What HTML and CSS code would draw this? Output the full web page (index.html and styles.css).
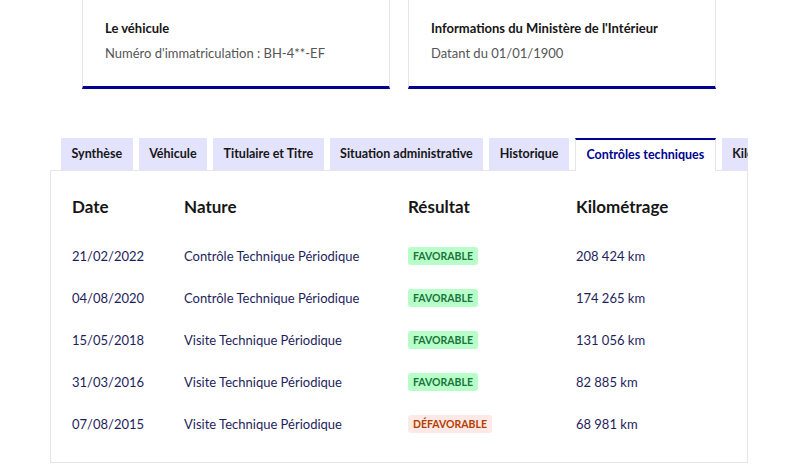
FILE: index.html
```html
<!DOCTYPE html>
<html lang="fr">
  <head>
    <meta charset="UTF-8" />
    <meta name="viewport" content="width=device-width, initial-scale=1.0" />
    <title>Historique du véhicule</title>
    <link rel="stylesheet" href="styles.css">
  </head>
  <body>
    <div class="cards">
      <div class="card">
        <h3 class="card-title">Le véhicule</h3>
        <p class="card-desc">Numéro d'immatriculation : BH-4**-EF</p>
      </div>
      <div class="card">
        <h3 class="card-title">Informations du Ministère de l'Intérieur</h3>
        <p class="card-desc">Datant du 01/01/1900</p>
      </div>
    </div>

    <div class="tabs">
      <ul class="tab-list">
        <li class="tab">Synthèse</li>
        <li class="tab">Véhicule</li>
        <li class="tab">Titulaire et Titre</li>
        <li class="tab">Situation administrative</li>
        <li class="tab">Historique</li>
        <li class="tab active">Contrôles techniques</li>
        <li class="tab">Kilométrage</li>
      </ul>
      <div class="tab-panel">
        <table class="ct-table">
          <thead>
            <tr>
              <th class="col-date">Date</th>
              <th class="col-nature">Nature</th>
              <th class="col-result">Résultat</th>
              <th>Kilométrage</th>
            </tr>
          </thead>
          <tbody>
            <tr>
              <td>21/02/2022</td>
              <td>Contrôle Technique Périodique</td>
              <td><span class="badge ok">Favorable</span></td>
              <td>208&#8239;424 km</td>
            </tr>
            <tr>
              <td>04/08/2020</td>
              <td>Contrôle Technique Périodique</td>
              <td><span class="badge ok">Favorable</span></td>
              <td>174&#8239;265 km</td>
            </tr>
            <tr>
              <td>15/05/2018</td>
              <td>Visite Technique Périodique</td>
              <td><span class="badge ok">Favorable</span></td>
              <td>131&#8239;056 km</td>
            </tr>
            <tr>
              <td>31/03/2016</td>
              <td>Visite Technique Périodique</td>
              <td><span class="badge ok">Favorable</span></td>
              <td>82&#8239;885 km</td>
            </tr>
            <tr>
              <td>07/08/2015</td>
              <td>Visite Technique Périodique</td>
              <td><span class="badge ko">Défavorable</span></td>
              <td>68&#8239;981 km</td>
            </tr>
          </tbody>
        </table>
      </div>
    </div>
  </body>
</html>
```

FILE: styles.css
```css
* {
  margin: 0;
  padding: 0;
  box-sizing: border-box;
}

body {
  font-family: Lato, "Noto Sans", Arial, sans-serif;
  color: #161616;
  background: #fff;
  width: 798px;
  height: 466px;
  overflow: hidden;
}

/* Cartes du haut */
.cards {
  display: flex;
  gap: 18px;
  padding-left: 82px;
  margin-top: -20px;
}

.card {
  width: 308px;
  height: 109px;
  border: 1px solid #e5e5e5;
  border-bottom: 3px solid #000091;
  padding: 37px 22px 0;
}

.card-title {
  font-size: 13px;
  font-weight: 700;
  line-height: 20px;
}

.card-desc {
  font-size: 13px;
  line-height: 20px;
  color: #555;
  margin-top: 5px;
}

/* Onglets */
.tabs {
  width: 698px;
  margin: 49px 0 0 50px;
  overflow: hidden;
}

.tab-list {
  list-style: none;
  display: flex;
  gap: 6px;
  padding-left: 11px;
  white-space: nowrap;
}

.tab {
  flex-shrink: 0;
  height: 32px;
  padding: 0 10.5px;
  background: #e3e3fd;
  font-size: 12.5px;
  font-weight: 700;
  line-height: 32px;
  color: #161616;
}

.tab.active {
  background: #fff;
  color: #000091;
  border-top: 2px solid #000091;
  border-left: 1px solid #e5e5e5;
  border-right: 1px solid #e5e5e5;
  line-height: 30px;
  position: relative;
  margin-bottom: -1px;
  height: 33px;
  z-index: 1;
}

.tab-panel {
  border: 1px solid #e5e5e5;
  height: 293px;
  padding: 13px 21px 0;
}

/* Tableau */
.ct-table {
  border-collapse: collapse;
  text-align: left;
}

.ct-table thead tr {
  height: 51px;
}

.ct-table th {
  font-size: 17px;
  font-weight: 700;
  padding-bottom: 6px;
}

.ct-table td {
  font-size: 13px;
  color: #1e1e5c;
  height: 42px;
}

.col-date { width: 112px; }
.col-nature { width: 224px; }
.col-result { width: 168px; }

.badge {
  display: inline-block;
  font-size: 10.5px;
  font-weight: 700;
  text-transform: uppercase;
  line-height: 18px;
  padding: 0 5px;
  border-radius: 3px;
}

.badge.ok {
  background: #b8fec9;
  color: #18753c;
}

.badge.ko {
  background: #ffe9e6;
  color: #b34000;
}
```
